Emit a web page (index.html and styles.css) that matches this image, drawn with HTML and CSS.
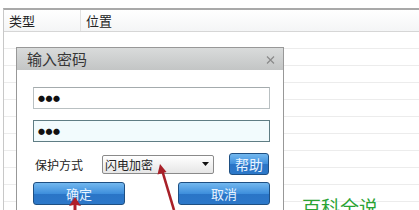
FILE: index.html
```html
<!DOCTYPE html>
<html lang="zh">
<head>
<meta charset="utf-8">
<link rel="stylesheet" href="styles.css">
</head>
<body>
<div class="list">
  <div class="head">
    <div class="col c1">类型</div>
    <div class="col c2">位置</div>
  </div>
  <div class="rows"></div>
</div>

<div class="dialog">
  <div class="titlebar">
    <span class="title">输入密码</span>
    <svg class="close" width="9" height="8" viewBox="0 0 9 8"><path d="M1 0.5 L8 7.5 M8 0.5 L1 7.5" stroke="#8a8a8a" stroke-width="1.2" fill="none"/></svg>
  </div>
  <div class="dbody">
    <div class="field"><span class="dots">●●●</span></div>
    <div class="field focus"><span class="dots">●●●</span></div>
    <div class="prow">
      <span class="plabel">保护方式</span>
      <div class="select"><span>闪电加密</span><svg width="7" height="4" viewBox="0 0 7 4"><path d="M0 0 H7 L3.5 4 Z" fill="#111"/></svg></div>
      <div class="btn help">帮助</div>
    </div>
    <div class="brow">
      <div class="btn big">确定</div>
      <div class="btn big">取消</div>
    </div>
  </div>
</div>

<div class="mark">百科全说</div>

<svg class="arrows" width="419" height="210" viewBox="0 0 419 210">
  <path d="M75 197 L69 206 L73.5 205 L73.5 210 L76.5 210 L76.5 205 L81 206 Z" fill="#b0202a"/>
  <path d="M174 210 L162 170" stroke="#a82028" stroke-width="2.6" fill="none"/>
  <path d="M160 164 L157.5 174.5 L166.5 172 Z" fill="#a82028"/>
</svg>
</body>
</html>
```
FILE: styles.css
```css
html, body {
  margin: 0;
  padding: 0;
  overflow: hidden;
}
body {
  width: 419px;
  height: 210px;
  background: #fff;
  font-family: "Noto Sans CJK SC", "Noto Sans", sans-serif;
  color: #222;
  position: relative;
}
.list {
  margin-top: 8px;
  margin-left: 3px;
  border-top: 2px solid #a9a9a9;
  border-left: 1px solid #c8c8c8;
  height: 200px;
}
.head {
  display: flex;
  height: 21px;
  border-bottom: 1px solid #d6d6d6;
  background: linear-gradient(#ffffff, #f4f5f6);
}
.col {
  font-size: 13px;
  line-height: 21px;
}
.c1 {
  width: 77px;
  padding-left: 5px;
  border-right: 1px solid #e2e2e2;
  box-sizing: border-box;
}
.c2 {
  padding-left: 5px;
}
.rows {
  height: 180px;
  background: repeating-linear-gradient(to bottom, #fff 0, #fff 16px, #ececec 16px, #ececec 17px);
}
.dialog {
  position: absolute;
  left: 16px;
  top: 47px;
  width: 268px;
  height: 163px;
  box-sizing: border-box;
  border: 1px solid #989898;
  border-bottom: none;
  background: #fff;
}
.titlebar {
  height: 22px;
  background: linear-gradient(#d9dbdb, #c3c5c5);
  display: flex;
  align-items: center;
  justify-content: space-between;
  padding: 0 8px 0 10px;
}
.title {
  font-size: 15px;
  color: #363636;
  line-height: 22px;
}
.close {
  margin-top: 1px;
}
.dbody {
  padding: 17px 13px 0 16px;
  display: flex;
  flex-direction: column;
}
.field {
  height: 22px;
  box-sizing: border-box;
  border: 1px solid #b9c0c2;
  border-top-color: #a4abad;
  background: #fff;
  display: flex;
  align-items: center;
  padding-left: 4px;
  margin-bottom: 11px;
}
.field.focus {
  border-color: #5f7d84;
  background: #f2fbfd;
}
.dots {
  font-size: 7px;
  letter-spacing: 0.5px;
  color: #111;
  line-height: 1;
}
.prow {
  display: flex;
  align-items: center;
  height: 22px;
}
.plabel {
  font-size: 12px;
  margin-left: 2px;
  width: 67px;
}
.select {
  width: 112px;
  height: 19px;
  box-sizing: border-box;
  border: 1px solid #8a8a8a;
  border-radius: 2px;
  background: linear-gradient(#ffffff, #e6e6e6);
  display: flex;
  align-items: center;
  justify-content: space-between;
  padding: 0 4px 0 2px;
  font-size: 12px;
}
.select span {
  line-height: 17px;
}
.btn {
  box-sizing: border-box;
  border: 1px solid #1e4f82;
  border-radius: 3px;
  background: linear-gradient(#73b8ef 0%, #3f8fdc 50%, #2a74c6 51%, #2c78c9 100%);
  color: #e8f3ff;
  display: flex;
  align-items: center;
  justify-content: center;
}
.help {
  margin-left: 15px;
  width: 40px;
  height: 22px;
  font-size: 14px;
}
.brow {
  display: flex;
  justify-content: space-between;
  margin-top: 7px;
}
.big {
  width: 92px;
  height: 23px;
  font-size: 13px;
}
.mark {
  position: absolute;
  left: 302px;
  top: 195px;
  font-size: 19px;
  color: #2aa334;
  line-height: 24px;
}
.arrows {
  position: absolute;
  left: 0;
  top: 0;
}
```
